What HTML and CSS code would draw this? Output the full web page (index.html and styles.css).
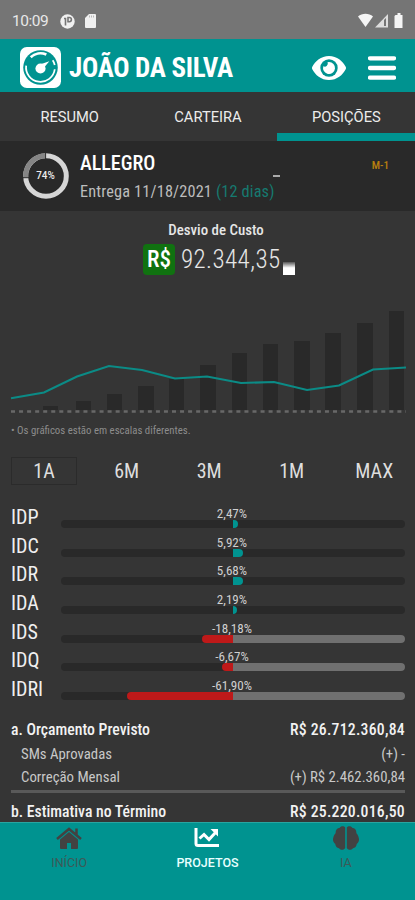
FILE: index.html
```html
<!DOCTYPE html>
<html lang="pt-BR">
<head>
<meta charset="utf-8">
<meta name="viewport" content="width=device-width, initial-scale=1">
<title>Projetos</title>
<link rel="stylesheet" href="styles.css">
</head>
<body>
<div class="app">
  <div class="status">
    <span class="clock">10:09</span>
    <svg class="st-p" viewBox="0 0 15 15"><circle cx="7.5" cy="7.5" r="7.2" fill="#f0f0f0"/><path d="M4 4.500h1.500v7M8 3.500h1.300a2 2 0 0 1 0 4.200H8z" fill="none" stroke="#757575" stroke-width="1.600"/></svg>
    <svg class="st-sd" viewBox="0 0 11 14"><path d="M4 0h6a1 1 0 0 1 1 1v12a1 1 0 0 1-1 1H1a1 1 0 0 1-1-1V4z" fill="#f0f0f0"/><path d="M4.5 1.5v2M6.5 1.5v2M8.5 1.5v2" stroke="#aaa" stroke-width=".8"/></svg>
    <svg class="st-right" viewBox="0 0 48 16"><path d="M0 3.4C4-.2 11-.2 15 3.4L7.5 14z" fill="#f5f5f5"/><path d="M17 14.5 30 1v13.5z" fill="#ddd"/><path d="M26 7v6h2V5z" fill="#757575"/><path d="M37.500 2h2V0h3v2h2v13h-8V3z" fill="#f5f5f5"/></svg>
  </div>
  <header class="header">
    <svg class="logo" viewBox="0 0 42 42"><rect width="42" height="42" rx="7" fill="#fff"/><circle cx="21" cy="21" r="17.7" fill="#009390"/><path d="M11 10.5a14.6 14.6 0 0 1 16-2.8" fill="none" stroke="#fff" stroke-width="2.7"/><path d="M6.3 19a14.7 14.7 0 0 0 29.3 3.8M33.5 13.5a14.7 14.7 0 0 1 2.1 5" fill="none" stroke="#fff" stroke-width="1.8"/><circle cx="21" cy="22" r="5.2" fill="#fff"/><path d="M19 18.500 30 14.500l-7 8.500z" fill="#fff"/></svg>
    <h1 class="user"><span>JOÃO DA SILVA</span></h1>
    <svg class="eye" viewBox="0 0 34 24"><path d="M17 0C9 0 3.2 5.2.3 10.8a2.5 2.5 0 0 0 0 2.4C3.2 18.800 9 24 17 24s13.800-5.200 16.700-10.800a2.500 2.500 0 0 0 0-2.400C30.800 5.200 25 0 17 0z" fill="#fff"/><circle cx="17" cy="12" r="8.700" fill="#009390"/><path d="M17 6a6 6 0 1 1-5.700 4.200 3 3 0 0 0 4.200-3.900A6 6 0 0 1 17 6z" fill="#fff"/></svg>
    <svg class="menu" viewBox="0 0 28 24"><path d="M2 2.300h24M2 12h24M2 21.700h24" stroke="#fff" stroke-width="4.300" stroke-linecap="round"/></svg>
  </header>
  <nav class="tabs">
    <div class="tab"><span>RESUMO</span></div>
    <div class="tab"><span>CARTEIRA</span></div>
    <div class="tab active"><span>POSIÇÕES</span></div>
  </nav>
  <section class="project">
    <svg class="ring" viewBox="0 0 46 46"><circle cx="23" cy="23" r="20.300" fill="none" stroke="#d6d6d6" stroke-width="5"/><path d="M2.700 24.300A20.300 20.300 0 0 1 22.300 2.700" fill="none" stroke="#858585" stroke-width="5"/><path d="M22.600 0v6M0 24.700h6" stroke="#292929" stroke-width="1"/><text class="ring-text" x="22.500" y="26.300" text-anchor="middle" textLength="18.500" lengthAdjust="spacingAndGlyphs">74%</text></svg>
    <div class="info">
      <div class="name"><span>ALLEGRO</span></div>
      <div class="due"><span>Entrega 11/18/2021 <em>(12 dias)</em></span></div>
    </div>
    <i class="dash"></i>
    <span class="badge">M-1</span>
  </section>
  <main class="body">
    <div class="kpi-title"><span>Desvio de Custo</span></div>
    <div class="kpi">
      <div class="currency"><span>R$</span></div>
      <div class="amount"><span>92.344,35</span></div>
      <i class="marker"></i>
    </div>
    <svg class="chart" viewBox="0 0 415 120">
      <g fill="#292929"><path d="M43 116h15v4H43zM76 111h15v9H76zM107 104h15v16h-15zM138 96h16v24h-16zM169 89h15v31h-15zM200 75h16v45h-16zM232 63h15v57h-15zM263 54h15v66h-15zM294 51h16v69h-16zM325 43h16v77h-16zM357 33h16v87h-16zM389 21h15v99h-15z"/></g>
      <path d="M11 121.500h395" stroke="#686868" stroke-width="2.300" stroke-dasharray="4 4.050"/>
      <polyline points="11,108.300 44,102.500 77,86.500 109,76 142,80 175,88.500 207,86.500 241,93 274,92 307,100 339,95.500 373,79.500 406,77.500" fill="none" stroke="#0b8b86" stroke-width="2.100"/>
    </svg>
    <div class="note"><span>• Os gráficos estão em escalas diferentes.</span></div>
    <div class="ranges">
      <div class="range on"><span>1A</span></div><div class="range"><span>6M</span></div><div class="range"><span>3M</span></div><div class="range"><span>1M</span></div><div class="range"><span>MAX</span></div>
    </div>
    <div class="indices">
      <div class="index"><b><span>IDP</span></b><div class="meter"><span class="val">2,47%</span><div class="track"><i></i><i><u class="pos" style="width:5px"></u></i></div></div></div>
      <div class="index"><b><span>IDC</span></b><div class="meter"><span class="val">5,92%</span><div class="track"><i></i><i><u class="pos" style="width:10px"></u></i></div></div></div>
      <div class="index"><b><span>IDR</span></b><div class="meter"><span class="val">5,68%</span><div class="track"><i></i><i><u class="pos" style="width:10px"></u></i></div></div></div>
      <div class="index"><b><span>IDA</span></b><div class="meter"><span class="val">2,19%</span><div class="track"><i></i><i><u class="pos" style="width:4px"></u></i></div></div></div>
      <div class="index"><b><span>IDS</span></b><div class="meter"><span class="val">-18,18%</span><div class="track bad"><i><u class="neg" style="width:31px"></u></i><i></i></div></div></div>
      <div class="index"><b><span>IDQ</span></b><div class="meter"><span class="val">-6,67%</span><div class="track bad"><i><u class="neg" style="width:11px"></u></i><i></i></div></div></div>
      <div class="index"><b><span>IDRI</span></b><div class="meter"><span class="val">-61,90%</span><div class="track bad"><i><u class="neg" style="width:106px"></u></i><i></i></div></div></div>
    </div>
    <div class="budget">
      <div class="line main"><span>a. Orçamento Previsto</span><span class="r">R$ 26.712.360,84</span></div>
      <div class="line sub"><span>SMs Aprovadas</span><span class="r">(+) -</span></div>
      <div class="line sub"><span>Correção Mensal</span><span class="r">(+) R$ 2.462.360,84</span></div>
      <div class="rule"></div>
      <div class="line main"><span>b. Estimativa no Término</span><span class="r">R$ 25.220.016,50</span></div>
    </div>
  </main>
  <footer class="bottom">
    <div class="nav"><svg viewBox="0 0 26 22"><path d="M13 5 22 12.500V21a1 1 0 0 1-1 1h-6v-6h-4v6H5a1 1 0 0 1-1-1v-8.500z"/><path d="M1 12 13 2l12 10M20.500 1.500v6" fill="none" stroke="#424242" stroke-width="2.500"/></svg><span>INÍCIO</span></div>
    <div class="nav sel"><svg viewBox="0 0 26 22"><path d="M2 1v15.500a2 2 0 0 0 2 2h21M5.500 11.500 10 7.500l5 5L22 5" fill="none" stroke="#fff" stroke-width="3"/><path d="M16.500 2H24v7.500z" fill="#fff"/></svg><span>PROJETOS</span></div>
    <div class="nav"><svg viewBox="0 0 26 24"><path d="M12.200 1.500C11-.3 7.500-.1 6.500 2 4 2 2.300 4.500 2.700 7 .5 9 .2 12 0 13c-.2 2 1 4 2.200 4.800C2.500 20.500 4 22 6 22.300 8 24.500 11 24.200 12.200 22zM13.800 1.500C15-.3 18.500-.1 19.500 2c2.500 0 4.200 2.500 3.800 5 2.200 2 2.500 5 2.700 6 .2 2-1 4-2.200 4.800-.3 2.700-1.800 4.200-3.800 4.500-2 2.200-5 1.900-6.200-.3z"/></svg><span>IA</span></div>
  </footer>
</div>
</body>
</html>
```
FILE: styles.css
```css
* { box-sizing: border-box; }
body { margin: 0; background: #353535; color: #e6e6e6; font-family: "Roboto Condensed", Roboto, "Liberation Sans", sans-serif; font-stretch: 75%; }
svg { display: block; flex: none; }
span { display: inline-block; white-space: nowrap; }
.app { width: 415px; height: 900px; display: flex; flex-direction: column; overflow: hidden; background: #353535; }
.status { flex: none; height: 39px; background: #757575; display: flex; align-items: center; padding: 3px 12px 0; }
.clock { width: 48px; font: 400 15.5px/20px Roboto, sans-serif; letter-spacing: -.5px; color: #e8e8e8; }
.st-p { width: 15px; height: 15px; }
.st-sd { width: 11px; height: 14px; margin-left: 10px; }
.st-right { width: 48px; height: 16px; margin-left: auto; margin-right: -3px; }
.header { flex: none; height: 53px; background: #009390; display: flex; align-items: center; padding: 4px 19px 0 20px; }
.logo { width: 41px; height: 41px; }
.user { margin: 1px 0 0 8px; flex: 1; min-width: 0; font-size: 27px; line-height: 40px; font-weight: 700; letter-spacing: -.3px; color: #fff; }
.eye { width: 34px; height: 24px; margin-right: 22px; }
.menu { width: 28px; height: 24px; }
.tabs { flex: none; height: 49px; display: flex; }
.tab { flex: 1; text-align: center; padding-left: 1px; font: 400 14.7px/50px Roboto, sans-serif; color: #ececec; }
.tab.active { box-shadow: inset 0 -8px #009390; }
.project { flex: none; height: 70px; background: #292929; display: flex; padding-left: 23px; position: relative; }
.ring { width: 46px; height: 46px; margin-top: 12px; }
.ring-text { font: 500 10px Roboto, sans-serif; fill: #eee; }
.info { margin-left: 11px; }
.name { margin-top: 9px; font-size: 20px; line-height: 26px; font-weight: 500; color: #fff; }
.due { margin-top: 5px; font-size: 16.3px; line-height: 22px; letter-spacing: .16px; color: #bdbdbd; }
.due em { font-style: normal; color: #167a70; }
.dash { position: absolute; left: 273px; top: 34px; width: 7px; height: 1.5px; background: #aaa; }
.badge { margin-left: auto; margin-right: 26px; margin-top: 17px; font-size: 11px; line-height: 16px; font-weight: 500; color: #b9800f; }
.body { flex: none; height: 611px; overflow: hidden; }
.kpi-title { margin-top: 9px; height: 20px; text-align: center; font-size: 14.9px; line-height: 20px; font-weight: 500; padding-left: 17px; }
.kpi { display: flex; height: 50px; padding: 4px 0 0 143px; }
.currency { width: 32px; height: 31px; background: #107210; border-radius: 4px; text-align: center; font-size: 23px; line-height: 32px; font-weight: 500; color: #fff; }
.amount { margin-left: 6px; width: 102px; font-size: 25px; line-height: 32px; font-weight: 300; letter-spacing: .4px; }
.marker { margin-top: 18px; width: 12px; height: 13px; background: linear-gradient(#555, #fff 45%); }
.chart { width: 415px; height: 120px; overflow: visible; }
.note { margin-top: 14px; height: 14px; padding-left: 11px; font-size: 10.800px; line-height: 14px; color: #8c8c8c; }
.ranges { margin-top: 19px; height: 28px; display: flex; padding-left: 2px; }
.range { width: 82.500px; padding-left: 1px; text-align: center; font-size: 20px; line-height: 29px; color: #dedede; }
.range.on { width: 66px; margin: 0 8px 0 9px; padding: 0; outline: 1.5px solid #2b2b2b; outline-offset: -1px; }
.indices { margin-top: 17px; }
.index { display: flex; height: 28.650px; padding: 0 10px 0 11px; }
.index b { width: 50px; font-size: 20px; line-height: 31px; font-weight: 400; color: #f0f0f0; }
.meter { width: 344px; text-align: center; }
.val { display: block; height: 18px; padding-right: 2px; font-size: 13.100px; line-height: 23px; color: #d0d0d0; }
.track { display: flex; height: 8px; border-radius: 4px; overflow: hidden; background: #292929; }
.track i { flex: 1; display: flex; }
.track u { height: 8px; }
.track.bad i:first-child { justify-content: flex-end; }
.track.bad i:last-child { background: #707070; }
.pos { background: #009390; border-radius: 0 4px 4px 0; }
.neg { background: #be1919; border-radius: 4px 0 0 4px; }
.budget { margin-top: 16px; padding: 0 10px 0 11px; }
.line { display: flex; justify-content: space-between; height: 24px; line-height: 24px; }
.main { font-size: 15.750px; font-weight: 500; color: #f2f2f2; }
.main .r { letter-spacing: .25px; }
.sub { font-size: 14.800px; color: #c8c8c8; padding-left: 10px; }
.sub + .sub { height: 23px; line-height: 23px; }
.rule { height: 3px; margin: 1px 0 7px; background: #595959; }
.bottom { flex: none; height: 78px; background: #009390; border-top: 1px solid #28a5a1; display: flex; }
.nav { flex: 1; display: flex; flex-direction: column; align-items: center; color: #3d5957; fill: #424242; padding-top: 3px; font: 400 12.500px/16px Roboto, sans-serif; }
.nav svg { width: 26px; height: 24px; }
.nav span { margin-top: 5px; }
.nav.sel { color: #e8ffff; font-weight: 500; }
```
